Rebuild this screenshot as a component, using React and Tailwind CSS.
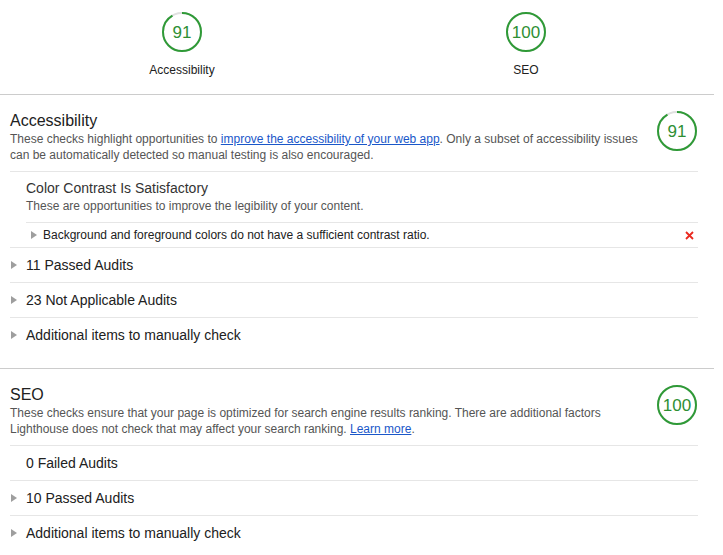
import React from "react";

const GREEN = "#2f9a37";

const Gauge = ({ score }) => {
  const c = 2 * Math.PI * 19;
  return (
    <div className="relative h-10 w-10 shrink-0">
      <svg width="40" height="40" viewBox="0 0 40 40">
        <circle cx="20" cy="20" r="19" fill="none" stroke="#e0e0e0" strokeWidth="2" />
        <circle
          cx="20"
          cy="20"
          r="19"
          fill="none"
          stroke={GREEN}
          strokeWidth="2"
          strokeDasharray={`${(c * score) / 100} ${c}`}
          transform="rotate(-90 20 20)"
        />
      </svg>
      <span className="absolute inset-0 flex items-center justify-center pt-[2px] text-[17px] text-[#2e8f34]">
        {score}
      </span>
    </div>
  );
};

const Arrow = () => (
  <svg width="6" height="8" viewBox="0 0 6 8">
    <polygon points="0,0 6,4 0,8" fill="#9e9e9e" />
  </svg>
);

const Row = ({ label, arrow = true }) => (
  <div className="flex items-center border-t border-[#e6e6e6] py-[7px] text-sm leading-5 text-[#212121]">
    <span className="flex w-4 pl-[1px]">{arrow && <Arrow />}</span>
    <span>{label}</span>
  </div>
);

const Section = ({ title, score, children, rows, last }) => (
  <div className={`pt-4 ${last ? "" : "border-b border-[#cccccc] pb-4"}`}>
    <div className="flex pl-[10px] pr-[17px]">
      <div className="min-w-0 flex-1">
        <h2 className="text-base leading-5 text-[#212121]">{title}</h2>
        <p className="text-xs leading-4 text-[#555555]">{children}</p>
      </div>
      <div className="ml-[10px]">
        <Gauge score={score} />
      </div>
    </div>
    <div className="mt-2 ml-[10px] mr-[16px]">{rows}</div>
  </div>
);

const Link = ({ children }) => (
  <a href="#" className="text-[#1a57c9] underline">
    {children}
  </a>
);

export default function App() {
  return (
    <div className="w-[714px] bg-white font-['Liberation_Sans',Arial,sans-serif]">
      {/* score summary */}
      <div className="flex gap-[244px] border-b border-[#cccccc] pl-[132px] pt-3 pb-4">
        {[
          ["Accessibility", 91],
          ["SEO", 100],
        ].map(([name, score]) => (
          <div key={name} className="flex w-[100px] flex-col items-center">
            <Gauge score={score} />
            <span className="mt-[10px] text-xs leading-4 text-[#212121]">{name}</span>
          </div>
        ))}
      </div>

      {/* Accessibility */}
      <Section
        title="Accessibility"
        score={91}
        rows={
          <>
            <div className="border-t border-[#e6e6e6]">
              <div className="pl-4 pt-[6px] pb-2">
                <h3 className="text-sm leading-5 text-[#333333]">Color Contrast Is Satisfactory</h3>
                <p className="text-xs leading-4 text-[#555555]">
                  These are opportunities to improve the legibility of your content.
                </p>
              </div>
              <div className="ml-4 flex h-[25px] items-center border-t border-[#e6e6e6] pr-1 text-xs text-[#212121]">
                <span className="flex w-[17px] pl-[5px]">
                  <Arrow />
                </span>
                <span className="flex-1">
                  Background and foreground colors do not have a sufficient contrast ratio.
                </span>
                <svg width="9" height="9" viewBox="0 0 9 9">
                  <path d="M1 1 L8 8 M8 1 L1 8" stroke="#ea2a20" strokeWidth="1.8" />
                </svg>
              </div>
            </div>
            <Row label="11 Passed Audits" />
            <Row label="23 Not Applicable Audits" />
            <Row label="Additional items to manually check" />
          </>
        }
      >
        These checks highlight opportunities to{" "}
        <Link>improve the accessibility of your web app</Link>. Only a subset of accessibility
        issues can be automatically detected so manual testing is also encouraged.
      </Section>

      {/* SEO */}
      <Section
        title="SEO"
        score={100}
        last
        rows={
          <>
            <Row label="0 Failed Audits" arrow={false} />
            <Row label="10 Passed Audits" />
            <Row label="Additional items to manually check" />
          </>
        }
      >
        These checks ensure that your page is optimized for search engine results ranking. There
        are additional factors Lighthouse does not check that may affect your search ranking.{" "}
        <Link>Learn more</Link>.
      </Section>
    </div>
  );
}
